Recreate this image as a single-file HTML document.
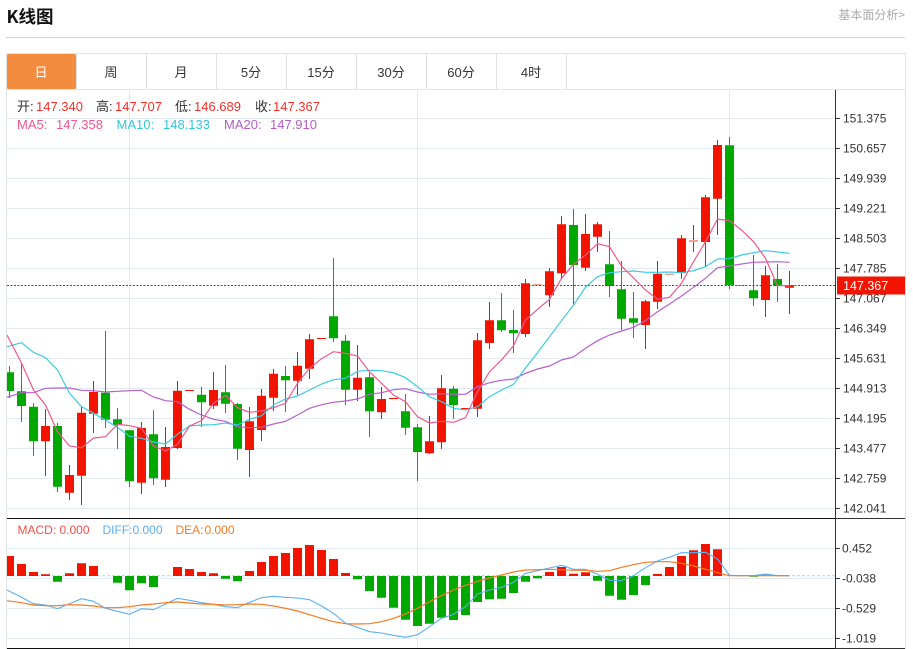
<!DOCTYPE html>
<html><head><meta charset="utf-8"><style>
html,body{margin:0;padding:0;background:#fff;width:913px;height:649px;overflow:hidden}
svg{display:block}
text{font-family:"Liberation Sans","Noto Sans CJK SC",sans-serif}
.cjk{font-family:"Noto Sans CJK SC","Liberation Sans",sans-serif}
</style></head><body>
<svg width="913" height="649" viewBox="0 0 913 649" xmlns="http://www.w3.org/2000/svg">
<defs><clipPath id="c"><rect x="7" y="90" width="828" height="558"/></clipPath></defs>
<text x="6.500" y="23" font-size="17.500" font-weight="700" fill="#111" class="cjk">K线图</text>
<text x="905" y="19" font-size="12" fill="#aaa" text-anchor="end" class="cjk">基本面分析&gt;</text>
<rect x="6" y="37" width="899" height="1" fill="#d4d4d4"/>
<!-- frame -->
<rect x="6" y="53" width="900" height="1" fill="#dfe3e6"/>
<rect x="6" y="53" width="1" height="596" fill="#dfe3e6"/>
<rect x="905" y="53" width="1" height="596" fill="#dfe3e6"/>
<rect x="6" y="89" width="900" height="1" fill="#e1e6ea"/>
<path d="M76.500 54V89M146.500 54V89M216.500 54V89M286.500 54V89M356.500 54V89M426.500 54V89M496.500 54V89M566.500 54V89" stroke="#e0e0e0" fill="none"/>
<rect x="7" y="54" width="69" height="35" rx="1.500" fill="#f48c3f"/>
<g font-size="13" text-anchor="middle" fill="#333" class="cjk">
<text x="41" y="77" fill="#fff">日</text><text x="111" y="77">周</text><text x="181" y="77">月</text><text x="251" y="77">5分</text><text x="321" y="77">15分</text><text x="391" y="77">30分</text><text x="461" y="77">60分</text><text x="531" y="77">4时</text>
</g>
<!-- grid -->
<path d="M7 118.500H835M7 148.500H835M7 178.500H835M7 208.500H835M7 238.500H835M7 268.500H835M7 298.500H835M7 328.500H835M7 358.500H835M7 388.500H835M7 418.500H835M7 448.500H835M7 478.500H835M7 508.500H835M7 548.500H835M7 578.500H835M7 608.500H835M7 638.500H835M129.500 90V648M417.500 90V648M729.500 90V648" stroke="#e1eaf1" fill="none"/>
<g clip-path="url(#c)">
<!-- green wicks -->
<path stroke="#0ea50e" fill="none" d="M9.500 366V398M21.500 363V422M33.500 403V456M57.500 423V492M105.500 331V428M117.500 408V449M129.500 430V487M153.500 410V485M201.500 387V427M225.500 365V413M237.500 403V460M285.500 366V412M333.500 258V342M345.500 335V405M369.500 373V437M405.500 394V435M417.500 424V481M453.500 386V419M501.500 293V332M513.500 310V353M573.500 209V305M609.500 231V297M621.500 261V330M633.500 292V338M729.500 137V289M753.500 255V306M777.500 264V302"/>
<!-- red wicks -->
<path stroke="#f01000" fill="none" d="M45.500 409V476M69.500 465V500M81.500 407V505M93.500 381V433M141.500 422V494M165.500 427V487M177.500 381V449M213.500 372V409M249.500 407V477M261.500 389V441M273.500 369V411M297.500 352V395M309.500 334V379M357.500 345V401M381.500 387V419M429.500 416V454M441.500 375V449M477.500 333V417M489.500 302V349M525.500 279V337M549.500 268V307M561.500 216V278M585.500 214V271M597.500 222V252M645.500 300V349M657.500 261V309M681.500 235V279M693.500 225V252M705.500 195V267M717.500 140V235M765.500 266V317M789.500 271V314"/>
<!-- green bodies -->
<path fill="#00a800" d="M7 372.300h7v18.700h-7zM17 391.300h9v14.700h-9zM29 406.700h9v34.600h-9zM53 426h9v60.700h-9zM101 392.700h9v27h-9zM113 419.300h9v5.700h-9zM125 430.300h9v51h-9zM149 434.300h9v44h-9zM197 394.700h9v7.600h-9zM221 392.300h9v11.400h-9zM233 404h9v44.700h-9zM281 376h9v4.300h-9zM329 316.300h9v22h-9zM341 340.700h9v49h-9zM365 377.300h9v34h-9zM401 411.300h9v16.400h-9zM413 427.300h9v24.700h-9zM449 388.700h9v16.300h-9zM497 320.300h9v10h-9zM509 330h9v3.300h-9zM569 225h9v40h-9zM605 264.300h9v21.700h-9zM617 289.300h9v29.400h-9zM629 318.300h9v4.400h-9zM725 145.300h9v140h-9zM749 290.300h9v8h-9zM773 279h9v7h-9z"/>
<!-- red bodies -->
<path fill="#f31400" d="M41 426h9v15.300h-9zM65 475h9v17.700h-9zM77 412.700h9v63h-9zM89 392h9v21.700h-9zM137 428h9v54.700h-9zM161 447h9v32.700h-9zM173 390.700h9v57.300h-9zM185 390h9v1h-9zM209 390h9v15.700h-9zM245 421.300h9v28.700h-9zM257 395.700h9v34.300h-9zM269 373.700h9v24h-9zM293 365.700h9v15h-9zM305 339.300h9v29.400h-9zM317 338h9v1h-9zM353 377.700h9v12h-9zM377 399h9v13.300h-9zM389 398h9v1h-9zM425 441.300h9v12h-9zM437 388.300h9v54h-9zM461 408h9v1h-9zM473 340.300h9v68.400h-9zM485 320.300h9v22.700h-9zM521 283.300h9v50.700h-9zM545 271.300h9v24h-9zM557 224.300h9v49h-9zM581 234h9v33.700h-9zM593 224.300h9v12.400h-9zM641 301.300h9v23.700h-9zM653 273.700h9v28h-9zM677 238.300h9v34.700h-9zM701 197.300h9v44.700h-9zM713 145h9v53.700h-9zM761 275.300h9v24.700h-9zM785 285.300h9v2.400h-9z"/>
<path fill="#f8a090" d="M533 284h9v1.500h-9zM665 273.500h9v1.500h-9zM737 285h9v1h-9zM689 240h9v2h-9z"/>
<!-- price line -->
<path d="M7 285.500H835" stroke="#e81208" stroke-dasharray="2 1.500" fill="none"/>
<!-- MA20 -->
<polyline fill="none" stroke="#b660cc" stroke-width="1.200" points="7,397.300 21.500,392.700 33.500,392.700 45.500,388.300 57.500,388 69.500,388 81.500,390.300 93.500,390.700 105.500,392 117.500,391.300 129.500,390.700 141.500,390.300 153.500,397 165.500,400.700 177.500,401.700 189.500,409.300 201.500,415 213.500,419.300 225.500,421.300 237.500,426.700 249.500,427.700 261.500,427.300 273.500,424 285.500,421.300 297.500,415 309.500,408.300 321.500,404.700 333.500,402.300 345.500,401 357.500,399 369.500,394.300 381.500,392.700 393.500,389.700 405.500,388.700 417.500,392 429.500,394.300 441.500,393.700 453.500,394.300 465.500,394.300 477.500,386.700 489.500,382.700 501.500,380.300 513.500,379 525.500,373.300 537.500,369 549.500,366 561.500,360 573.500,357 585.500,348.300 597.500,340.700 609.500,335 621.500,331 633.500,327.300 645.500,320.700 657.500,311.700 669.500,304 681.500,296 693.500,287.300 705.500,278.300 717.500,267.700 729.500,266 741.500,264 753.500,262.300 765.500,262 777.500,261.700 789.500,262.300"/>
<!-- MA10 -->
<polyline fill="none" stroke="#3ccbe0" stroke-width="1.200" points="7,346.700 21.500,342.700 33.500,352.300 45.500,357.700 57.500,370 69.500,393.300 81.500,406.700 93.500,413.300 105.500,420 117.500,427.300 129.500,436.300 141.500,438.300 153.500,442 165.500,444 177.500,434.300 189.500,426 201.500,425 213.500,424.700 225.500,423 237.500,425 249.500,419.300 261.500,415.700 273.500,405 285.500,399 297.500,396 309.500,390 321.500,384 333.500,379.700 345.500,378.300 357.500,371.300 369.500,370.300 381.500,370.700 393.500,372.700 405.500,377.700 417.500,386.700 429.500,396.700 441.500,401.700 453.500,408.300 465.500,410 477.500,406.700 489.500,396.700 501.500,390 513.500,384.300 525.500,368 537.500,352.700 549.500,336.700 561.500,320.700 573.500,305 585.500,287.300 597.500,276.700 609.500,272.700 621.500,271.700 633.500,271 645.500,272.300 657.500,272.300 669.500,272 681.500,272.700 693.500,270.700 705.500,266.700 717.500,259 729.500,258.700 741.500,255 753.500,252.700 765.500,250.700 777.500,252 789.500,253.300"/>
<!-- MA5 -->
<polyline fill="none" stroke="#f0588c" stroke-width="1.200" points="7,335 21.500,363 33.500,390 45.500,405 57.500,431.700 69.500,446 81.500,447.700 93.500,438 105.500,436.700 117.500,424.300 129.500,425.700 141.500,428.300 153.500,446 165.500,451 177.500,444.300 189.500,426 201.500,420.700 213.500,403.300 225.500,395.300 237.500,407.700 249.500,412.300 261.500,411 273.500,407.700 285.500,403.300 297.500,383.300 309.500,368.300 321.500,358.700 333.500,351.700 345.500,353.300 357.500,356 369.500,371.700 381.500,383.300 393.500,395 405.500,401.700 417.500,416.700 429.500,423 441.500,421.300 453.500,422.300 465.500,417.700 477.500,391.700 489.500,371.700 501.500,360 513.500,345.700 525.500,320 537.500,309.300 549.500,299.300 561.500,278.300 573.500,264.300 585.500,255 597.500,243.700 609.500,246.700 621.500,266 633.500,278 645.500,290 657.500,299.300 669.500,297.300 681.500,283.300 693.500,261.700 705.500,241.700 717.500,219 729.500,220.700 741.500,230 753.500,241.700 765.500,258.300 777.500,285.700 789.500,285.700"/>
<!-- MACD -->
<path d="M7 575.700H835" stroke="#a9d6ea" stroke-dasharray="3 2" fill="none"/>
<path fill="#f31400" d="M7 556h7v20h-7zM17 564h9v12h-9zM29 572h9v4h-9zM41 574.300h9v1.700h-9zM65 573.300h9v2.700h-9zM77 563.300h9v12.700h-9zM89 566h9v10h-9zM173 567h9v9h-9zM185 569h9v7h-9zM197 572h9v4h-9zM209 573.300h9v2.700h-9zM245 571h9v5h-9zM257 562h9v14h-9zM269 556h9v20h-9zM281 553h9v23h-9zM293 548h9v28h-9zM305 545h9v31h-9zM317 550h9v26h-9zM329 559h9v17h-9zM341 573h9v3h-9zM545 572h9v4h-9zM557 567h9v9h-9zM569 573.700h9v2.300h-9zM581 572.300h9v3.700h-9zM653 574h9v2h-9zM665 567h9v9h-9zM677 556h9v20h-9zM689 550.300h9v25.700h-9zM701 544h9v32h-9zM713 549.300h9v26.700h-9z"/>
<path fill="#00a800" d="M53 576h9v5.700h-9zM113 576h9v6.700h-9zM125 576h9v14.300h-9zM137 576h9v7.300h-9zM149 576h9v11h-9zM221 576h9v2.700h-9zM233 576h9v5.300h-9zM353 576h9v3.300h-9zM365 576h9v15h-9zM377 576h9v21.700h-9zM389 576h9v31.700h-9zM401 576h9v43.700h-9zM413 576h9v50h-9zM425 576h9v47.700h-9zM437 576h9v41.700h-9zM449 576h9v44h-9zM461 576h9v39h-9zM473 576h9v26h-9zM485 576h9v23.300h-9zM497 576h9v22.700h-9zM509 576h9v17h-9zM521 576h9v5.700h-9zM533 576h9v2.300h-9zM593 576h9v4.700h-9zM605 576h9v19.700h-9zM617 576h9v23.700h-9zM629 576h9v19h-9zM641 576h9v9h-9zM749 576h9v.800h-9z"/>
<path fill="#c89aa8" d="M761 574.300h9v1.500h-9z"/>
<polyline fill="none" stroke="#5cb0f2" stroke-width="1.100" points="7,590 21.500,597.300 33.500,603.700 45.500,605 57.500,608.700 69.500,603.700 81.500,598.700 93.500,601.300 105.500,608.300 117.500,611.300 129.500,614.300 141.500,608.700 153.500,609.700 165.500,604 177.500,598.300 189.500,600.300 201.500,602.700 213.500,604.300 225.500,606.700 237.500,607.700 249.500,602.300 261.500,597.700 273.500,596.300 285.500,597.300 297.500,598 309.500,599.700 321.500,606 333.500,613.300 345.500,623.300 357.500,627.300 369.500,631.700 381.500,633 393.500,635.300 405.500,637.300 417.500,634.700 429.500,626.700 441.500,618.300 453.500,614.300 465.500,606.700 477.500,594 489.500,590 501.500,587.300 513.500,582.300 525.500,573.300 537.500,570.700 549.500,568 561.500,565.300 573.500,569.300 585.500,569.300 597.500,574.300 609.500,580.300 621.500,580.700 633.500,575.700 645.500,567.700 657.500,561 669.500,557.300 681.500,552.700 693.500,552.700 705.500,552.300 717.500,559 729.500,575.300 741.500,575.700 753.500,575.700 765.500,574 777.500,575.700 789.500,575.700"/>
<polyline fill="none" stroke="#f57a20" stroke-width="1.200" points="7,600.700 21.500,602.700 33.500,605 45.500,605.700 57.500,605.700 69.500,604.700 81.500,605 93.500,606 105.500,607.700 117.500,607.700 129.500,606.700 141.500,605 153.500,604 165.500,602.700 177.500,602 189.500,603 201.500,604 213.500,604.300 225.500,605 237.500,604.700 249.500,604 261.500,604.300 273.500,606 285.500,608.300 297.500,611 309.500,614.700 321.500,618.300 333.500,621.700 345.500,623.700 357.500,624 369.500,623.700 381.500,621.700 393.500,618.300 405.500,614 417.500,608.300 429.500,601.700 441.500,595.700 453.500,590 465.500,585.300 477.500,581.300 489.500,578 501.500,575 513.500,572 525.500,570 537.500,569.700 549.500,569.300 561.500,569.700 573.500,570.300 585.500,570.300 597.500,571.300 609.500,570.700 621.500,567.300 633.500,564.700 645.500,562.300 657.500,561.700 669.500,561.700 681.500,563.300 693.500,566 705.500,569.300 717.500,572.700 729.500,575.700 741.500,575.700 753.500,575.700 765.500,575.700 777.500,575.700 789.500,575.700"/>
</g>
<!-- axes -->
<rect x="7" y="518" width="828" height="1" fill="#111"/>
<rect x="835" y="518" width="70" height="1" fill="#333"/>
<rect x="7" y="648" width="828" height="1" fill="#111"/>
<rect x="835" y="648" width="70" height="1" fill="#333"/>
<rect x="835" y="90" width="1" height="558" fill="#333"/>
<path d="M836 118.500h4M836 148.500h4M836 178.500h4M836 208.500h4M836 238.500h4M836 268.500h4M836 298.500h4M836 328.500h4M836 358.500h4M836 388.500h4M836 418.500h4M836 448.500h4M836 478.500h4M836 508.500h4M836 548.500h4M836 578.500h4M836 608.500h4M836 638.500h4" stroke="#333" fill="none"/>
<g font-size="12" fill="#333">
<text x="843" y="122.500">151.375</text><text x="843" y="152.500">150.657</text><text x="843" y="182.500">149.939</text><text x="843" y="212.500">149.221</text><text x="843" y="242.500">148.503</text><text x="843" y="272.500">147.785</text><text x="843" y="302.500">147.067</text><text x="843" y="332.500">146.349</text><text x="843" y="362.500">145.631</text><text x="843" y="392.500">144.913</text><text x="843" y="422.500">144.195</text><text x="843" y="452.500">143.477</text><text x="843" y="482.500">142.759</text><text x="843" y="512.500">142.041</text>
<text x="842" y="552.500">0.452</text><text x="842" y="582.500">-0.038</text><text x="842" y="612.500">-0.529</text><text x="842" y="642.500">-1.019</text>
</g>
<rect x="837" y="276.500" width="68" height="18" fill="#f31400"/>
<text x="843" y="290" font-size="12.500" fill="#fff">147.367</text>
<!-- legend -->
<g font-size="13">
<g fill="#333" class="cjk"><text x="17" y="111">开:</text><text x="96" y="111">高:</text><text x="175" y="111">低:</text><text x="255" y="111">收:</text></g>
<g fill="#f5302a"><text x="36" y="111">147.340</text><text x="115" y="111">147.707</text><text x="194" y="111">146.689</text><text x="273" y="111">147.367</text></g>
<g fill="#f4558d"><text x="17" y="129">MA5:</text><text x="56" y="129">147.358</text></g>
<g fill="#34c6dc"><text x="116.500" y="129">MA10:</text><text x="163" y="129">148.133</text></g>
<g fill="#b35cc8"><text x="224" y="129">MA20:</text><text x="270" y="129">147.910</text></g>
</g>
<g font-size="12">
<g fill="#f0504a"><text x="17.500" y="534">MACD:</text><text x="59.500" y="534">0.000</text></g>
<g fill="#5aaef0"><text x="102.500" y="534">DIFF:</text><text x="132.500" y="534">0.000</text></g>
<g fill="#f57a20"><text x="175.500" y="534">DEA:</text><text x="204.500" y="534">0.000</text></g>
</g>
</svg>
</body></html>
